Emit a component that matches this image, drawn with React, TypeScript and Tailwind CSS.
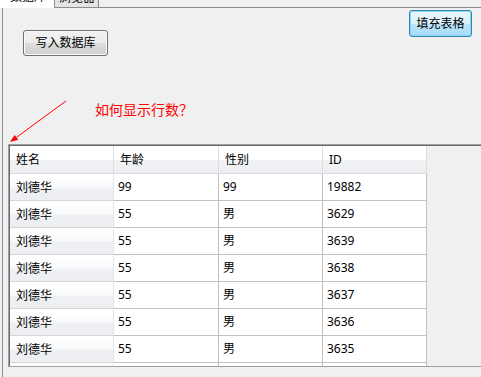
const rows: string[][] = [
  ['刘德华', '99', '99', '19882'],
  ['刘德华', '55', '男', '3629'],
  ['刘德华', '55', '男', '3639'],
  ['刘德华', '55', '男', '3638'],
  ['刘德华', '55', '男', '3637'],
  ['刘德华', '55', '男', '3636'],
  ['刘德华', '55', '男', '3635'],
  ['', '', '', ''],
];

const widths = ['w-[104px]', 'w-[105px]', 'w-[104px]', 'w-[104px]'];

function Arrow() {
  return (
    <svg className="pointer-events-none absolute left-0 top-0" width="100" height="150">
      <line x1="66" y1="101" x2="16.5" y2="137.3" stroke="#ff0000" strokeWidth="1" />
      <polygon points="10,142 18.2,139.7 14.7,134.9" fill="#ff0000" />
    </svg>
  );
}

function Grid() {
  return (
    <div className="ml-[5px] mt-[26px] border-t border-l border-b border-[#a0a0a0]">
      <div className="h-[221px] overflow-hidden border-t border-l border-[#696969] bg-[#f0f0f0]">
        <div className="flex h-[28px]">
          {['姓名', '年龄', '性别', 'ID'].map((h, i) => (
            <div
              key={h}
              className={`${widths[i]} flex items-center pl-[6px] border-r border-b border-[#dcdde0] bg-[linear-gradient(to_bottom,#ffffff_0%,#ffffff_50%,#f1f2f4_52%,#eceef1_100%)]`}
            >
              {h}
            </div>
          ))}
        </div>
        {rows.map((r, ri) => (
          <div key={ri} className="flex h-[27px]">
            <div className="w-[104px] flex items-center pl-[6px] border-t border-white border-r border-r-[#e3e4e6] border-b border-b-[#d5d5d5] bg-[linear-gradient(to_bottom,#ffffff_0%,#f9fafb_45%,#eef0f3_55%,#eceef1_100%)]">
              {r[0]}
            </div>
            {r.slice(1).map((c, ci) => (
              <div
                key={ci}
                className={`${widths[ci + 1]} flex items-center pl-[4px] bg-white border-r border-b border-[#c0c0c0]`}
              >
                {c}
              </div>
            ))}
          </div>
        ))}
      </div>
    </div>
  );
}

export default function App() {
  return (
    <div className="relative w-[481px] h-[377px] overflow-hidden bg-[#f0f0f0] text-black text-[12px] font-['Noto_Sans','Noto_Sans_CJK_SC',sans-serif]">
      <div className="flex h-[8px]">
        <div className="w-[55px] overflow-hidden bg-white border-r border-[#898c95]">
          <div className="pl-[10px] -mt-[10px] leading-[14px]">数据库</div>
        </div>
        <div className="w-[44px] overflow-hidden bg-[#e4e4e4] border-r border-b border-[#898c95]">
          <div className="pl-[4px] -mt-[9px] leading-[14px]">浏览器</div>
        </div>
        <div className="flex-1 border-b border-[#898c95]" />
      </div>

      <div className="ml-[2px] h-[369px] border-l border-[#898c95] flex flex-col">
        <div className="flex justify-between items-start pl-[20px] pr-[9px]">
          <button className="mt-[22px] w-[85px] h-[26px] rounded-[3px] border border-[#707070] shadow-[inset_0_0_0_1px_#fcfcfc] bg-[linear-gradient(to_bottom,#f2f2f2_0%,#ebebeb_50%,#dddddd_51%,#cfcfcf_100%)] text-[12px]">
            写入数据库
          </button>
          <button className="mt-[2px] w-[63px] h-[27px] rounded-[3px] border border-[#3c7fb1] shadow-[inset_0_0_0_1px_#7fdcfa] bg-[linear-gradient(to_bottom,#eaf6fd_0%,#d9f0fc_50%,#bee6fd_51%,#a7d9f5_100%)] text-[12px]">
            填充表格
          </button>
        </div>

        <div className="pl-[92px] mt-[45px] text-[14px] leading-[17px] text-[#ff0000] font-['Noto_Sans_CJK_SC',sans-serif]">
          如何显示行数？
        </div>

        <Grid />
      </div>

      <Arrow />
    </div>
  );
}
